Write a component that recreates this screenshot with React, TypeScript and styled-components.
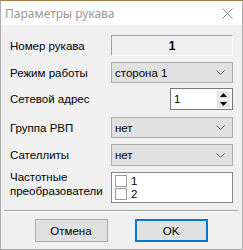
import React, { FC } from 'react'
import styled, { createGlobalStyle } from 'styled-components'

const Global = createGlobalStyle`
  html, body {
    margin: 0;
    padding: 0;
    background: #f0f0f0;
  }
  * {
    box-sizing: border-box;
  }
`

const Window = styled.div`
  width: 243px;
  height: 250px;
  display: flex;
  flex-direction: column;
  background: #f0f0f0;
  border: 1px solid #aaaaaa;
  border-top-color: #9e7a48;
  font-family: 'Liberation Sans', Arial, sans-serif;
  font-size: 11.5px;
  color: #000;
  overflow: hidden;
`

const TitleBar = styled.div`
  height: 24px;
  flex: none;
  display: flex;
  align-items: center;
  justify-content: space-between;
  padding-left: 4px;
  padding-right: 9px;
  background: #fff;
`

const Title = styled.span`
  font-family: 'Noto Sans', 'Open Sans', sans-serif;
  font-size: 12px;
  color: #999999;
`

const Body = styled.div`
  flex: 1;
  display: flex;
  flex-direction: column;
  padding: 10px 9px 0 8px;
`

const Row = styled.div<{ $top: number; $align?: string }>`
  display: grid;
  grid-template-columns: 102px 1fr;
  align-items: ${(p) => p.$align || 'center'};
  margin-top: ${(p) => p.$top}px;
`

const Label = styled.div<{ $shift?: number }>`
  padding-left: 1px;
  line-height: 14px;
  margin-top: ${(p) => p.$shift || 0}px;
`

const StaticField = styled.div`
  height: 21px;
  display: flex;
  align-items: center;
  justify-content: center;
  font-weight: bold;
  font-size: 12px;
  border: 1px solid #a0a0a0;
  border-right-color: #fff;
  border-bottom-color: #fff;
`

const Combo = styled.div<{ $h: number }>`
  height: ${(p) => p.$h}px;
  display: flex;
  align-items: center;
  justify-content: space-between;
  padding: 0 7px 0 3px;
  background: #e1e1e1;
  border: 1px solid #adadad;
`

const SpinWrap = styled.div`
  display: flex;
  justify-content: flex-end;
`

const Spin = styled.div`
  width: 63px;
  height: 22px;
  display: flex;
  align-items: center;
  justify-content: space-between;
  padding: 0 2px 0 3px;
  background: #fff;
  border: 1px solid #7a7a7a;
`

const SpinButtons = styled.div`
  display: flex;
  flex-direction: column;
  gap: 1px;
`

const SpinButton = styled.div`
  width: 13px;
  height: 8px;
  display: flex;
  align-items: center;
  justify-content: center;
  background: #e5e5e5;
`

const ListBox = styled.div`
  height: 31px;
  padding: 1px 3px;
  background: #fff;
  border: 1px solid #828790;
`

const CheckItem = styled.div`
  height: 13px;
  display: flex;
  align-items: center;
  gap: 4px;
`

const CheckBox = styled.span`
  width: 12px;
  height: 12px;
  border: 1px solid #9a9a9a;
  background: #fff;
`

const Separator = styled.div`
  margin: 7px -5px 0 -5px;
  height: 2px;
  border-top: 1px solid #a0a0a0;
  border-bottom: 1px solid #fff;
`

const Buttons = styled.div`
  display: flex;
  justify-content: center;
  gap: 27px;
  margin-top: 7px;
`

const Button = styled.div<{ $primary?: boolean }>`
  width: 73px;
  height: 23px;
  display: flex;
  align-items: center;
  justify-content: center;
  background: #e1e1e1;
  border: ${(p) => (p.$primary ? '2px solid #0078d7' : '1px solid #adadad')};
`

const Chevron: FC = () => (
  <svg width="9" height="5" viewBox="0 0 9 5">
    <path d="M0.5 0.5 L4.5 4.5 L8.5 0.5" fill="none" stroke="#606060" strokeWidth="1" />
  </svg>
)

const Arrow: FC<{ up?: boolean }> = ({ up }) => (
  <svg width="7" height="4" viewBox="0 0 7 4">
    <path d={up ? 'M0 4 L3.5 0 L7 4 Z' : 'M0 0 L3.5 4 L7 0 Z'} fill="#000" />
  </svg>
)

const CloseIcon: FC = () => (
  <svg width="11" height="11" viewBox="0 0 11 11">
    <path d="M0.5 0.5 L10.5 10.5 M10.5 0.5 L0.5 10.5" stroke="#8a8a8a" strokeWidth="1" />
  </svg>
)

const App: FC = () => {
  return (
    <>
      <Global />
      <Window>
        <TitleBar>
          <Title>Параметры рукава</Title>
          <CloseIcon />
        </TitleBar>
        <Body>
          <Row $top={0}>
            <Label>Номер рукава</Label>
            <StaticField>1</StaticField>
          </Row>
          <Row $top={6}>
            <Label>Режим работы</Label>
            <Combo $h={21}>
              сторона 1
              <Chevron />
            </Combo>
          </Row>
          <Row $top={5}>
            <Label>Сетевой адрес</Label>
            <SpinWrap>
              <Spin>
                1
                <SpinButtons>
                  <SpinButton>
                    <Arrow up />
                  </SpinButton>
                  <SpinButton>
                    <Arrow />
                  </SpinButton>
                </SpinButtons>
              </Spin>
            </SpinWrap>
          </Row>
          <Row $top={7}>
            <Label>Группа РВП</Label>
            <Combo $h={21}>
              нет
              <Chevron />
            </Combo>
          </Row>
          <Row $top={6}>
            <Label>Сателлиты</Label>
            <Combo $h={22}>
              нет
              <Chevron />
            </Combo>
          </Row>
          <Row $top={6} $align="start">
            <Label $shift={-2}>
              Частотные
              <br />
              преобразователи
            </Label>
            <ListBox>
              <CheckItem>
                <CheckBox />1
              </CheckItem>
              <CheckItem>
                <CheckBox />2
              </CheckItem>
            </ListBox>
          </Row>
          <Separator />
          <Buttons>
            <Button>Отмена</Button>
            <Button $primary>OK</Button>
          </Buttons>
        </Body>
      </Window>
    </>
  )
}

export default App
